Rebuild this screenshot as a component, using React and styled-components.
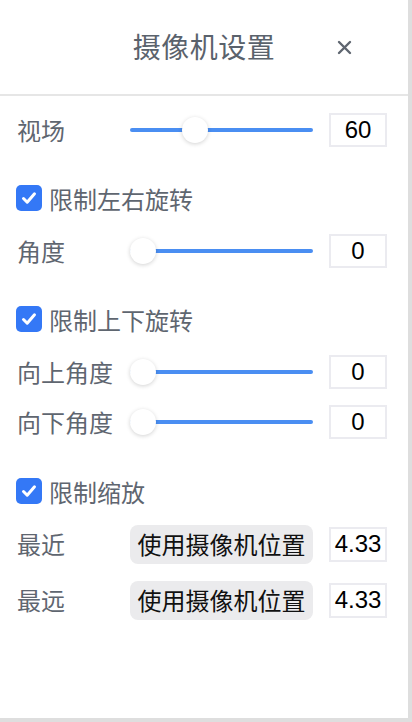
import React from 'react';
import styled, { createGlobalStyle } from 'styled-components';

const GlobalStyle = createGlobalStyle`
    html, body {
        margin: 0;
        padding: 0;
        background: #dedede;
    }
    * {
        box-sizing: border-box;
    }
`;

const Panel = styled.div`
    width: 408px;
    height: 718px;
    background: #ffffff;
    display: flex;
    flex-direction: column;
    font-family: "Noto Sans CJK SC", "Liberation Sans", sans-serif;
`;

const Header = styled.div`
    height: 96px;
    border-bottom: 2px solid #e6e6e6;
    display: grid;
    grid-template-columns: 1fr auto 1fr;
    align-items: center;
    padding-bottom: 2px;
`;

const Title = styled.div`
    grid-column: 2;
    font-size: 28px;
    line-height: 32px;
    color: #5a626c;
    letter-spacing: 0.5px;
`;

const CloseButton = styled.button`
    grid-column: 3;
    justify-self: end;
    margin-right: 54px;
    margin-top: 2px;
    width: 19px;
    height: 19px;
    padding: 0;
    border: none;
    background: none;
    display: flex;
    align-items: center;
    justify-content: center;
`;

const Content = styled.div`
    display: flex;
    flex-direction: column;
    padding: 9px 21px 0 17px;
`;

const Section = styled.div`
    display: flex;
    flex-direction: column;
    margin-top: ${props => props.gap}px;
`;

const CheckHeader = styled.label`
    height: 44px;
    display: flex;
    align-items: center;
    gap: 7px;
    margin-bottom: ${props => props.tight ? '3px' : '6px'};
    font-size: 24px;
    color: #5f6670;
    margin-left: -1px;
`;

const CheckBox = styled.span`
    width: 26px;
    height: 26px;
    border-radius: 5px;
    background: #3478f6;
    display: flex;
    align-items: center;
    justify-content: center;
    flex-shrink: 0;
`;

const Row = styled.div`
    height: ${props => props.tall ? '56px' : '50px'};
    display: grid;
    grid-template-columns: 97px 183px 58px;
    column-gap: 16px;
    align-items: center;
`;

const Label = styled.span`
    font-size: 24px;
    line-height: 30px;
    color: #5f6670;
    white-space: nowrap;
`;

const Slider = styled.input`
    -webkit-appearance: none;
    appearance: none;
    width: 183px;
    height: 4px;
    margin: 0;
    border-radius: 2px;
    background: #4a8ef2;
    outline: none;

    &::-webkit-slider-thumb {
        -webkit-appearance: none;
        width: 26px;
        height: 26px;
        border-radius: 50%;
        background: #ffffff;
        box-shadow: 0 1px 4px rgba(0, 0, 0, 0.18);
        cursor: pointer;
    }
`;

const NumberBox = styled.input`
    width: 58px;
    height: ${props => props.short ? '35px' : '34px'};
    border: 2px solid #ebebf0;
    border-radius: 0;
    margin: 0;
    padding: 0;
    text-align: center;
    font-family: "Liberation Sans", Arial, sans-serif;
    font-size: 24px;
    color: #000000;
    background: #ffffff;
    outline: none;
`;

const PositionButton = styled.button`
    width: 183px;
    height: 39px;
    border: none;
    border-radius: 8px;
    background: #ebebed;
    padding: 0;
    font-family: "Noto Sans CJK SC", sans-serif;
    font-size: 24px;
    line-height: 30px;
    color: #111111;
`;

const Check = () => (
    <CheckBox>
        <svg width="18" height="18" viewBox="0 0 18 18">
            <polyline points="3.5,9.5 7.2,13.2 14.5,4.8" fill="none" stroke="#ffffff"
                strokeWidth="3" strokeLinecap="round" strokeLinejoin="round" />
        </svg>
    </CheckBox>
);

const SliderRow = ({ label, value, min, max }) => (
    <Row>
        <Label>{label}</Label>
        <Slider type="range" min={min} max={max} defaultValue={value} />
        <NumberBox type="text" defaultValue={value} />
    </Row>
);

const DistanceRow = ({ label, value }) => (
    <Row tall>
        <Label>{label}</Label>
        <PositionButton>使用摄像机位置</PositionButton>
        <NumberBox short type="text" defaultValue={value} />
    </Row>
);

const App = () => (
    <>
        <GlobalStyle />
        <Panel>
            <Header>
                <Title>摄像机设置</Title>
                <CloseButton aria-label="close">
                    <svg width="15" height="15" viewBox="0 0 15 15">
                        <path d="M2 2 L13 13 M13 2 L2 13" stroke="#5f6670" strokeWidth="2.4" strokeLinecap="round" />
                    </svg>
                </CloseButton>
            </Header>
            <Content>
                <Section gap={0}>
                    <SliderRow label="视场" value={60} min={10} max={160} />
                </Section>
                <Section gap={21}>
                    <CheckHeader><Check />限制左右旋转</CheckHeader>
                    <SliderRow label="角度" value={0} min={0} max={180} />
                </Section>
                <Section gap={21}>
                    <CheckHeader><Check />限制上下旋转</CheckHeader>
                    <SliderRow label="向上角度" value={0} min={0} max={90} />
                    <SliderRow label="向下角度" value={0} min={0} max={90} />
                </Section>
                <Section gap={22}>
                    <CheckHeader tight><Check />限制缩放</CheckHeader>
                    <DistanceRow label="最近" value="4.33" />
                    <DistanceRow label="最远" value="4.33" />
                </Section>
            </Content>
        </Panel>
    </>
);

export default App;
